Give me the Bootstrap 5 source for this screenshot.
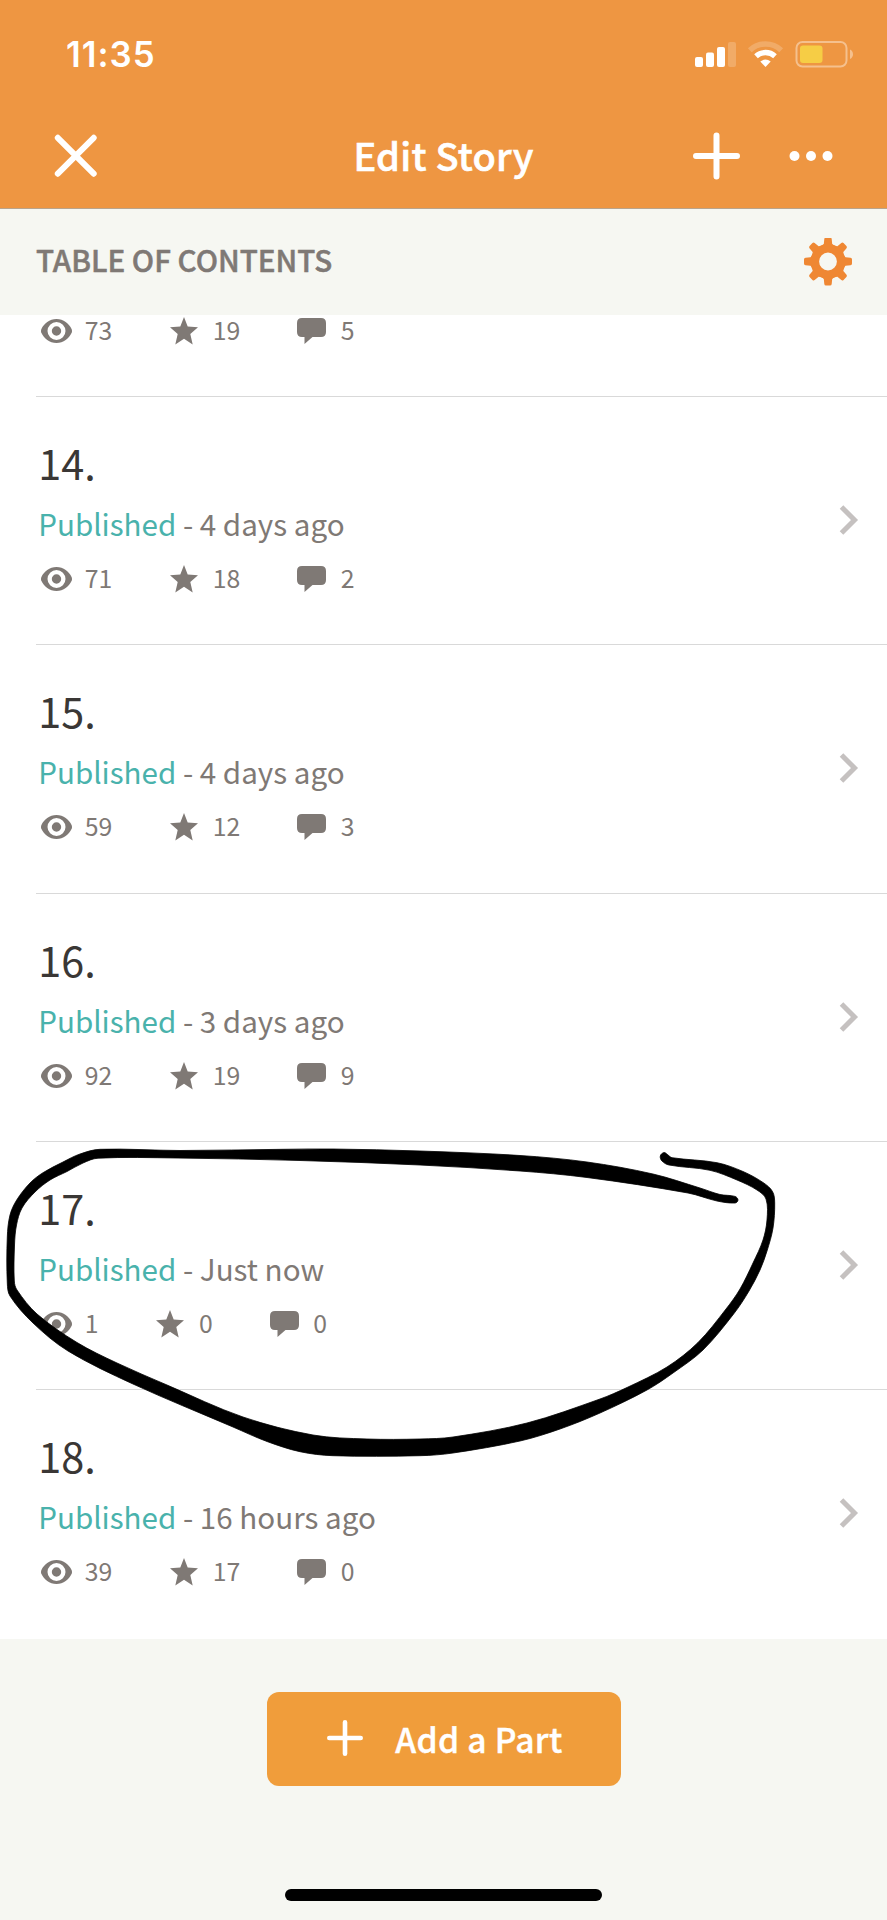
<!DOCTYPE html>
<html lang="en">
<head>
<meta charset="utf-8">
<meta name="viewport" content="width=device-width, initial-scale=1">
<title>Edit Story</title>
<link href="https://cdn.jsdelivr.net/npm/bootstrap@5.3.0/dist/css/bootstrap.min.css" rel="stylesheet">
<style>
  body { font-family: "Noto Sans CJK SC", sans-serif; background: #f6f7f2; color: #7f7975; width: 887px; height: 1920px; overflow: hidden; }
  svg { display: block; flex: none; }
  .app-head { height: 209px; background: #ee9642; border-bottom: 1px solid #b9a48c; }
  .status-line { height: 108px; padding: 0 34px 0 66px; }
  .clock { font: 600 34.8px/109px Inter, sans-serif; letter-spacing: 1px; }
  .title-line { height: 96px; padding: 0 53px 0 54px; }
  .title-text { font-size: 38px; line-height: 56px; font-weight: 500; letter-spacing: .25px; margin-top: -3px; -webkit-text-stroke: .6px; }
  .toc-bar { height: 105.5px; padding: 0 35px 0 36px; }
  .toc-label { font-size: 29.6px; line-height: 40px; font-weight: 500; margin-top: -4px; -webkit-text-stroke: .5px; }
  .part-list { height: 1324.5px; overflow: hidden; }
  .part-row { height: 248.3px; margin-left: 35.500px; padding: 40px 28px 0 2.700px; }
  .part-row + .part-row { border-top: 1px solid #d9d9d9; }
  .part-first { height: 81.5px; padding-top: 0; }
  .part-first .stats { margin-top: -1.500px; }
  .part-no { font-size: 41.4px; line-height: 50px; color: #3a3735; }
  .part-state { font-size: 29.6px; line-height: 40px; margin-top: 17px; }
  .live { color: #49b2ac; }
  .stats { font-size: 24.8px; line-height: 30px; margin-top: 17px; padding-left: 2.500px; }
  .stats svg { margin-top: 4px; }
  .add-part { width: 354px; height: 94px; margin-top: 53px; border-radius: 12px; background: #f09d3b; font-size: 33.6px; font-weight: 500; padding: 0 58px 0 60px; }
  .add-part svg { margin-top: -2px; }
  .add-part span { letter-spacing: .3px; -webkit-text-stroke: .4px; }
  .home-bar { width: 317px; height: 12px; border-radius: 6px; margin-top: 103px; }
  .scribble { left: 0; top: 1130px; pointer-events: none; }
</style>
</head>
<body class="position-relative">
<svg width="0" height="0" class="position-absolute">
  <symbol id="eye" viewBox="0 0 31 24"><path fill="#7f7975" fill-rule="evenodd" d="M15.500 0C8.500 0 3 4.500 0.300 10.200Q-.300 12 .300 13.800C3 19.500 8.500 24 15.500 24S28 19.500 30.700 13.800Q31.300 12 30.700 10.200C28 4.500 22.500 0 15.500 0ZM15.500 3a9 9 0 1 1 0 18a9 9 0 0 1 0-18ZM15.500 7.300a4.700 4.700 0 1 0 0 9.400a4.700 4.700 0 0 0 0-9.400Z"/></symbol>
  <symbol id="star" viewBox="0 0 28 28"><path fill="#7f7975" d="M14 0L17.700 9.400L28 10.200L20.300 16.900L22.700 27.500L14 21.800L5.300 27.500L7.700 16.900L0 10.200L10.300 9.400Z"/></symbol>
  <symbol id="chat" viewBox="0 0 29 26"><path fill="#7f7975" d="M5 0H24Q29 0 29 5V14Q29 19 24 19H15.500L7.500 26V19H5Q0 19 0 14V5Q0 0 5 0Z"/></symbol>
  <symbol id="next" viewBox="0 0 20 30"><path fill="none" stroke="#c5c1c0" stroke-width="5" stroke-linejoin="miter" d="M2.500 2L15.500 15L2.500 28"/></symbol>
</svg>

<header class="app-head text-white">
  <div class="status-line d-flex align-items-center justify-content-between">
    <div class="clock">11:35</div>
    <svg width="162" height="30" viewBox="0 0 162 30" fill="#fff">
      <rect x="4" y="18" width="8" height="10" rx="2"/><rect x="15" y="13.500" width="8" height="14.500" rx="2"/><rect x="26" y="8" width="8" height="20" rx="2"/><rect x="37" y="3" width="8" height="25" rx="2" opacity=".2"/>
      <g fill="none" stroke="#fff"><path d="M58.800 11.200A23 23 0 0 1 90.200 11.200" stroke-width="5.600" opacity=".2"/><path d="M65 17.200A14.200 14.200 0 0 1 84 17.200" stroke-width="5.400"/></g>
      <path d="M69.300 22.500Q74.500 18.600 79.700 22.500L74.500 28Z"/>
      <rect x="105.500" y="3" width="50" height="24.500" rx="6" fill="none" stroke="#fff" stroke-width="2" opacity=".4"/>
      <rect x="109" y="6.500" width="22.500" height="17.500" rx="3" fill="#f6cd45"/>
      <path d="M159 10.500Q162 12 162 15.200T159 20Z" opacity=".4"/>
    </svg>
  </div>
  <div class="title-line d-flex align-items-center justify-content-between position-relative">
    <svg width="44" height="44" viewBox="0 0 44 44" stroke="#fff" stroke-width="6" stroke-linecap="round"><path d="M3.800 3.800L39.700 39.700M39.700 3.800L3.800 39.700"/></svg>
    <div class="title-text position-absolute start-50 translate-middle-x text-nowrap">Edit Story</div>
    <svg width="141" height="48" viewBox="0 0 141 48"><path d="M3 24H44M23.500 3.500V44.500" stroke="#fff" stroke-width="6" stroke-linecap="round"/><g fill="#fff"><circle cx="101.500" cy="24" r="5"/><circle cx="118" cy="24" r="5"/><circle cx="134.500" cy="24" r="5"/></g></svg>
  </div>
</header>

<div class="toc-bar d-flex align-items-center justify-content-between">
  <div class="toc-label">TABLE OF CONTENTS</div>
  <svg width="48" height="48" viewBox="-24 -23.500 48 48">
    <defs><path id="tooth" d="M-7-15L-4.200-17.500L-3.700-22.500Q-3.500-24-2-24H2Q3.500-24 3.700-22.500L4.200-17.500L7-15Z"/></defs>
    <circle r="13.200" fill="none" stroke="#ef8733" stroke-width="8.600"/>
    <g fill="#ef8733"><use href="#tooth"/><use href="#tooth" transform="rotate(45)"/><use href="#tooth" transform="rotate(90)"/><use href="#tooth" transform="rotate(135)"/><use href="#tooth" transform="rotate(180)"/><use href="#tooth" transform="rotate(225)"/><use href="#tooth" transform="rotate(270)"/><use href="#tooth" transform="rotate(315)"/></g>
  </svg>
</div>

<main class="part-list bg-white" id="parts"></main>

<footer class="d-flex flex-column align-items-center">
  <button class="add-part btn border-0 text-white d-flex align-items-center justify-content-between">
    <svg width="36" height="36" viewBox="0 0 36 36" stroke="#fff" stroke-width="4.600" stroke-linecap="round"><path d="M2.300 18H33.700M18 2.300V33.700"/></svg>
    <span>Add a Part</span>
  </button>
  <div class="home-bar bg-black"></div>
</footer>

<svg class="scribble position-absolute" width="887" height="345" viewBox="0 1130 887 345"><path id="ink" stroke="#000" stroke-width=".8" stroke-linejoin="round"/></svg>

<script src="https://cdn.jsdelivr.net/npm/bootstrap@5.3.0/dist/js/bootstrap.bundle.min.js"></script>
<script>
  const parts = [
    [13, '', 73, 19, 5], [14, '4 days ago', 71, 18, 2], [15, '4 days ago', 59, 12, 3],
    [16, '3 days ago', 92, 19, 9], [17, 'Just now', 1, 0, 0], [18, '16 hours ago', 39, 17, 0]
  ];
  // The first part is scrolled under the bar: only its stats remain in view.
  document.getElementById('parts').innerHTML = parts.map(([no, when, views, votes, notes], i) => `
    <div class="part-row d-flex justify-content-between ${i ? '' : 'part-first'}">
      <div>
        ${i ? `<div class="part-no">${no}.</div>
        <div class="part-state"><span class="live">Published</span> - ${when}</div>` : ''}
        <div class="stats d-flex align-items-center">
          <svg width="31" height="24"><use href="#eye"/></svg><span style="margin:0 57.500px 0 13px">${views}</span>
          <svg width="28" height="28"><use href="#star"/></svg><span style="margin:0 57px 0 15px">${votes}</span>
          <svg width="29" height="26"><use href="#chat"/></svg><span style="margin-left:14.500px">${notes}</span>
        </div>
      </div>
      ${i ? '<svg width="20" height="30" style="margin-top:68px"><use href="#next"/></svg>' : ''}
    </div>`).join('');

  // Pen stroke outline: outer edge counter-clockwise from the tail, then back along the inner edge.
  const edge = [[738,1200],[735,1196.400],[720,1194.500],[700,1188],[653,1174],[587,1162],[520,1155.500],[420,1151],[333,1149],[283,1149.300],[180,1150.500],[100,1149.300],[80,1154],[63,1162],[43,1172.700],[30,1183],[16.700,1200],[10,1215],[7.300,1237],[7.300,1283],[10,1296],[33,1323],[68,1351],[133,1384],[233,1427],[267,1441.500],[300,1451.700],[333,1455.700],[420,1455.700],[453,1453],[520,1441],[560,1429],[600,1413],[647,1390],[673,1373],[703,1350],[734,1313.500],[749,1291],[760,1270],[767,1251],[773,1228],[774.700,1203],[772.500,1191.500],[763,1182.500],[743,1171.500],[717,1162.700],[672,1157.700],[668,1155],[664,1152.600],[660.300,1156],[662,1161],[669,1165],[710,1170.300],[737,1180],[757,1190],[766,1199],[767,1220],[763,1240],[753,1263],[740,1289],[726,1309],[698,1342.500],[667,1367],[627,1387.500],[600,1399],[527,1423],[453,1437],[420,1439],[367,1439],[313,1435],[243,1417],[167,1385],[117,1363],[77,1342.500],[37,1314],[17,1290],[14.300,1281],[14.500,1245],[16.500,1225],[22,1208],[35,1192],[50,1180],[67,1171.500],[83,1163],[98,1158.200],[177,1158],[300,1160.500],[420,1165],[520,1171],[587,1177.500],[688,1193],[717,1201],[735,1203]];
  const n = edge.length, at = i => edge[(i + n) % n];
  let d = 'M' + edge[0];
  for (let i = 0; i < n; i++) {
    const [a, b, c, e] = [at(i - 1), at(i), at(i + 1), at(i + 2)];
    const len = Math.hypot(c[0] - b[0], c[1] - b[1]);
    const tangent = (p, q, s) => { const m = Math.hypot(q[0] - p[0], q[1] - p[1]); return [(q[0] - p[0]) / m * len / 3 * s, (q[1] - p[1]) / m * len / 3 * s]; };
    const t = tangent(a, c, 1), u = tangent(b, e, -1);
    d += `C${b[0] + t[0]},${b[1] + t[1]} ${c[0] + u[0]},${c[1] + u[1]} ${c}`;
  }
  document.getElementById('ink').setAttribute('d', d + 'Z');
</script>
</body>
</html>
